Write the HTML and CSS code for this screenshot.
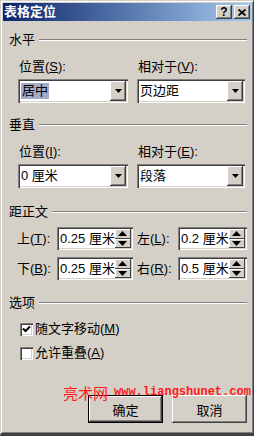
FILE: index.html
```html
<!DOCTYPE html>
<html lang="zh-CN">
<head>
    <meta charset="UTF-8">
    <meta name="viewport" content="width=device-width, initial-scale=1.0">
    <title>表格定位</title>

    <link rel="stylesheet" href="styles.css">

</head>
<body>
    <div class="window">
        <div class="titlebar">
            <span class="title">表格定位</span>
            <span class="tbtn help">?</span>
            <span class="tbtn close">
                <svg width="8" height="7" viewBox="0 0 8 7"><path d="M0.5 0.5L7.5 6.5M7.5 0.5L0.5 6.5" stroke="#000" stroke-width="1.7"/></svg>
            </span>
        </div>

        <div class="content">
            <!-- 水平 -->
            <div class="group first">
                <div class="ghead"><span>水平</span><i class="etch"></i></div>
                <div class="cols">
                    <div class="field">
                        <div class="lbl">位置(<u>S</u>):</div>
                        <div class="combo">
                            <span class="val"><span class="sel">居中</span></span>
                            <span class="drop"><svg width="7" height="4" viewBox="0 0 7 4"><path d="M0 0h7L3.5 4z"/></svg></span>
                        </div>
                    </div>
                    <div class="field right">
                        <div class="lbl">相对于(<u>V</u>):</div>
                        <div class="combo">
                            <span class="val">页边距</span>
                            <span class="drop"><svg width="7" height="4" viewBox="0 0 7 4"><path d="M0 0h7L3.5 4z"/></svg></span>
                        </div>
                    </div>
                </div>
            </div>

            <!-- 垂直 -->
            <div class="group">
                <div class="ghead"><span>垂直</span><i class="etch"></i></div>
                <div class="cols">
                    <div class="field">
                        <div class="lbl">位置(<u>I</u>):</div>
                        <div class="combo">
                            <span class="val">0 厘米</span>
                            <span class="drop"><svg width="7" height="4" viewBox="0 0 7 4"><path d="M0 0h7L3.5 4z"/></svg></span>
                        </div>
                    </div>
                    <div class="field right">
                        <div class="lbl">相对于(<u>E</u>):</div>
                        <div class="combo">
                            <span class="val">段落</span>
                            <span class="drop"><svg width="7" height="4" viewBox="0 0 7 4"><path d="M0 0h7L3.5 4z"/></svg></span>
                        </div>
                    </div>
                </div>
            </div>

            <!-- 距正文 -->
            <div class="group dist">
                <div class="ghead"><span>距正文</span><i class="etch"></i></div>
                <div class="spinrow">
                    <div class="spinitem">
                        <span class="slbl">上(<u>T</u>):</span>
                        <div class="spin">
                            <span class="val">0.25 厘米</span>
                            <span class="arrows">
                                <span class="sbtn"><svg width="9" height="5" viewBox="0 0 9 5"><path d="M4.5 0L9 5H0z"/></svg></span>
                                <span class="sbtn"><svg width="9" height="5" viewBox="0 0 9 5"><path d="M0 0h9L4.5 5z"/></svg></span>
                            </span>
                        </div>
                    </div>
                    <div class="spinitem right">
                        <span class="slbl">左(<u>L</u>):</span>
                        <div class="spin">
                            <span class="val">0.2 厘米</span>
                            <span class="arrows">
                                <span class="sbtn"><svg width="9" height="5" viewBox="0 0 9 5"><path d="M4.5 0L9 5H0z"/></svg></span>
                                <span class="sbtn"><svg width="9" height="5" viewBox="0 0 9 5"><path d="M0 0h9L4.5 5z"/></svg></span>
                            </span>
                        </div>
                    </div>
                </div>
                <div class="spinrow second">
                    <div class="spinitem">
                        <span class="slbl">下(<u>B</u>):</span>
                        <div class="spin">
                            <span class="val">0.25 厘米</span>
                            <span class="arrows">
                                <span class="sbtn"><svg width="9" height="5" viewBox="0 0 9 5"><path d="M4.5 0L9 5H0z"/></svg></span>
                                <span class="sbtn"><svg width="9" height="5" viewBox="0 0 9 5"><path d="M0 0h9L4.5 5z"/></svg></span>
                            </span>
                        </div>
                    </div>
                    <div class="spinitem right">
                        <span class="slbl">右(<u>R</u>):</span>
                        <div class="spin">
                            <span class="val">0.5 厘米</span>
                            <span class="arrows">
                                <span class="sbtn"><svg width="9" height="5" viewBox="0 0 9 5"><path d="M4.5 0L9 5H0z"/></svg></span>
                                <span class="sbtn"><svg width="9" height="5" viewBox="0 0 9 5"><path d="M0 0h9L4.5 5z"/></svg></span>
                            </span>
                        </div>
                    </div>
                </div>
            </div>

            <!-- 选项 -->
            <div class="group opts">
                <div class="ghead"><span>选项</span><i class="etch"></i></div>
                <div class="check first-check">
                    <span class="box"><svg width="9" height="9" viewBox="0 0 9 9"><path d="M1 3.5L3.5 6L8 1.5" fill="none" stroke="#000" stroke-width="2"/></svg></span>
                    <span>随文字移动(<u>M</u>)</span>
                </div>
                <div class="check">
                    <span class="box"></span>
                    <span>允许重叠(<u>A</u>)</span>
                </div>
            </div>

            <div class="buttons">
                <div class="btn default"><span>确定</span></div>
                <div class="btn"><span>取消</span></div>
            </div>
        </div>

        <div class="watermark"><span class="wm-cn">亮术网</span><span class="wm-url">www.liangshunet.com</span></div>
    </div>
</body>
</html>
```

FILE: styles.css
```css
body {
    margin: 0;
    background: #fff;
    font-family: "Liberation Sans", "Noto Sans CJK SC", sans-serif;
    font-size: 13px;
    color: #000;
}

.window {
    position: relative;
    box-sizing: border-box;
    width: 254px;
    height: 436px;
    padding: 2px;
    background: #d4d0c8;
    border-top: 1px solid #d4d0c8;
    border-left: 1px solid #d4d0c8;
    border-right: 1px solid #404040;
    border-bottom: 3px solid #404040;
    box-shadow: inset 1px 1px #fff, inset -1px -1px #808080;
}

/* title bar */
.titlebar {
    display: flex;
    align-items: center;
    height: 18px;
    padding: 0 1px 0 1px;
    background: linear-gradient(to right, #0a246a, #a6caf0);
}

.title {
    flex: 1;
    color: #fff;
    font-weight: bold;
    font-size: 13px;
    line-height: 16px;
}

.tbtn {
    display: flex;
    align-items: center;
    justify-content: center;
    box-sizing: border-box;
    width: 16px;
    height: 14px;
    background: #d4d0c8;
    box-shadow: inset -1px -1px #404040, inset 1px 1px #fff, inset -2px -2px #808080;
    font-weight: bold;
    font-size: 12px;
    line-height: 12px;
}

.help {
    margin-right: 2px;
}

/* body */
.content {
    padding: 0 4px 0 6px;
}

.group {
    margin-top: 15px;
}

.group.first {
    margin-top: 12px;
}

.group.dist {
    margin-top: 17px;
}

.group.opts {
    margin-top: 16px;
}

.ghead {
    display: flex;
    align-items: center;
    height: 14px;
    line-height: 14px;
}

.etch {
    flex: 1;
    height: 1px;
    margin-left: 4px;
    background: #808080;
    border-bottom: 1px solid #fff;
}

.cols {
    display: flex;
    gap: 9px;
    margin: 13px 2px 0 9px;
}

.field {
    display: flex;
    flex-direction: column;
    gap: 5px;
    width: 110px;
}

.field.right {
    width: 108px;
}

.lbl {
    height: 14px;
    line-height: 14px;
    padding-left: 1px;
}

.combo,
.spin {
    display: flex;
    box-sizing: border-box;
    height: 24px;
    padding: 2px;
    background: #fff;
    box-shadow: inset 1px 1px #808080, inset 2px 2px #404040, inset -1px -1px #fff, inset -2px -2px #d4d0c8;
}

.val {
    flex: 1;
    display: flex;
    align-items: center;
    padding-left: 1px;
    white-space: nowrap;
    overflow: hidden;
    line-height: 16px;
}

.sel {
    background: #a4abc9;
    padding: 0 1px;
}

.drop {
    display: flex;
    align-items: center;
    justify-content: center;
    width: 16px;
    background: #d4d0c8;
    box-shadow: inset -1px -1px #404040, inset 1px 1px #fff, inset -2px -2px #808080;
}

/* spinners */
.spinrow {
    display: flex;
    gap: 10px;
    margin: 8px 2px 0 8px;
}

.spinrow.second {
    margin-top: 7px;
}

.spinitem {
    display: flex;
    align-items: center;
    width: 110px;
}

.spinitem.right {
    width: 109px;
}

.slbl {
    width: 40px;
    flex-shrink: 0;
    line-height: 14px;
}

.spinitem.right .slbl {
    width: 41px;
}

.spin {
    flex: 1;
    height: 23px;
}

.arrows {
    display: flex;
    flex-direction: column;
    width: 16px;
}

.sbtn {
    flex: 1;
    display: flex;
    align-items: center;
    justify-content: center;
    background: #d4d0c8;
    box-shadow: inset -1px -1px #404040, inset 1px 1px #fff;
}

/* checkboxes */
.check {
    display: flex;
    align-items: center;
    gap: 2px;
    height: 14px;
    line-height: 14px;
    margin: 10px 0 0 11px;
}

.check.first-check {
    margin-top: 12px;
}

.box {
    display: flex;
    align-items: center;
    justify-content: center;
    box-sizing: border-box;
    width: 13px;
    height: 13px;
    background: #fff;
    box-shadow: inset 1px 1px #808080, inset 2px 2px #404040, inset -1px -1px #fff, inset -2px -2px #d4d0c8;
}

/* dialog buttons */
.buttons {
    display: flex;
    justify-content: flex-end;
    gap: 9px;
    margin-top: 35px;
}

.btn {
    display: flex;
    align-items: center;
    justify-content: center;
    box-sizing: border-box;
    width: 75px;
    height: 28px;
    background: #d4d0c8;
    box-shadow: inset -1px -1px #404040, inset 1px 1px #fff, inset -2px -2px #808080;
}

.btn.default {
    border: 1px solid #000;
}

/* watermark */
.watermark {
    position: absolute;
    left: 62px;
    top: 384px;
    display: flex;
    align-items: center;
    color: #ff1a1a;
    line-height: 15px;
    white-space: nowrap;
}

.wm-cn {
    font-family: "Noto Sans CJK SC", sans-serif;
    font-size: 15px;
}

.wm-url {
    margin-left: 6px;
    font-family: "Liberation Mono", monospace;
    font-size: 12px;
    font-weight: bold;
}
```
